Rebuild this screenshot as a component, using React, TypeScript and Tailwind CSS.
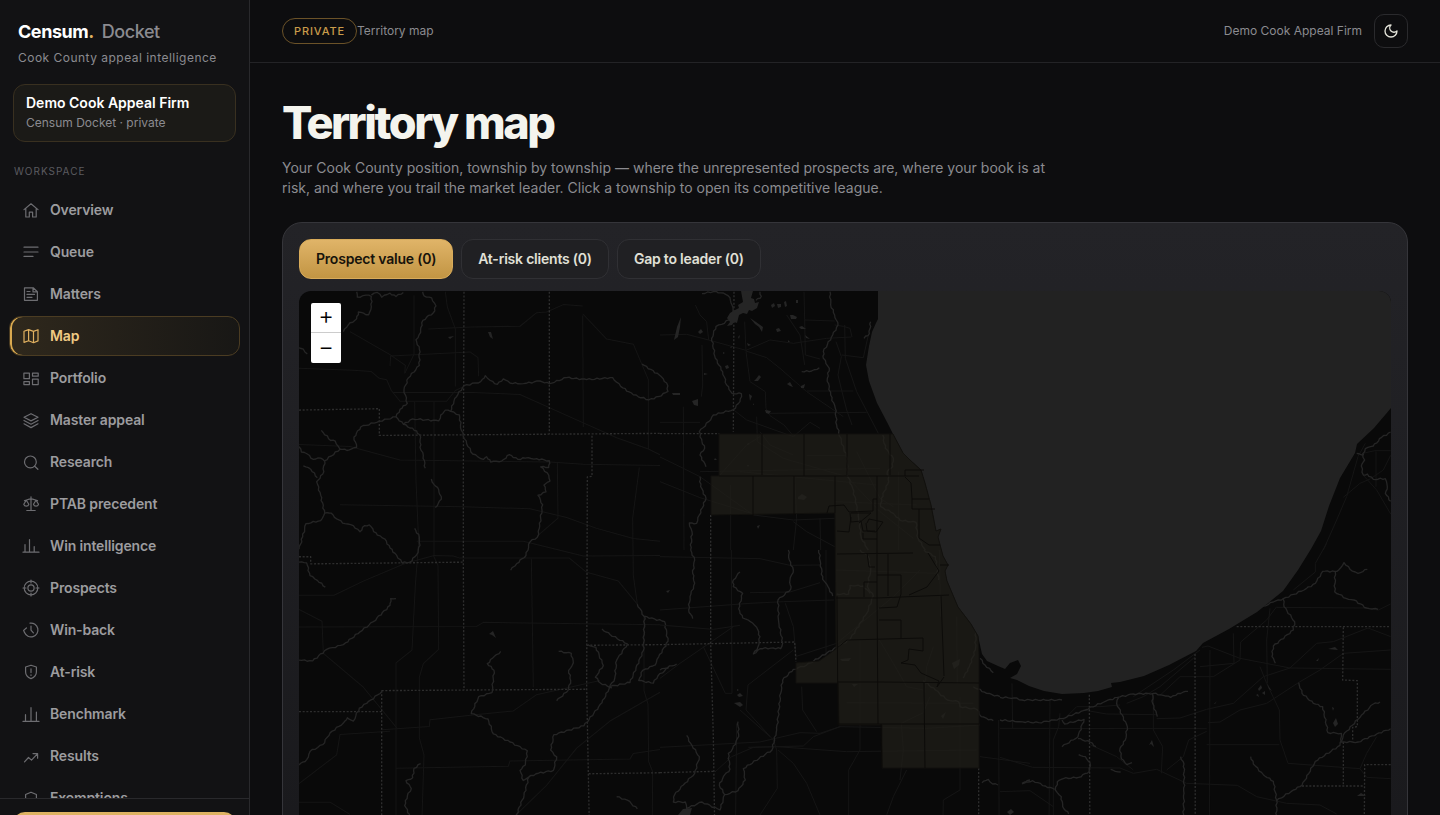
import React, { useState } from 'react'

type NavItem = { label: string; icon: React.ReactNode }

const navItems: NavItem[] = [
  { label: 'Overview', icon: <path d="M1 7.6 8 1.8l7 5.8M2.8 6.2V15h3.5v-4.8h3.3V15h3.6V6.2" /> },
  { label: 'Queue', icon: <path d="M1 3.2h14M1 8h14M1 12.4h9" /> },
  { label: 'Matters', icon: <path d="M1.5 1.8h8.7l4.2 4v8.5H1.5zM10 2v3.9h4.2M4 5.5h3M4 8.4h7.5M4 11.3h5" /> },
  { label: 'Map', icon: <path d="M1 3.2l4.6-1.6 4.9 1.8L15 1.7v11.2l-4.5 1.8-4.9-1.9L1 14.4zM5.6 1.6v11.2M10.5 3.4v11.3" /> },
  { label: 'Portfolio', icon: <path d="M.9 3.2h5.5v5.5H.9zM9.5 3.2h5.7v3H9.5zM.9 11.6h5.5v3H.9zM9.5 9.2h5.7v5.4H9.5z" /> },
  { label: 'Master appeal', icon: <path d="M8 1.7l7 3.6-7 3.6-7-3.6zM1 8.5l7 3.7 7-3.7M1 11.8l7 3.8 7-3.8" /> },
  { label: 'Research', icon: <><circle cx="7.4" cy="7.9" r="5.9" /><path d="M11.7 12.2l3.2 3.1" /></> },
  { label: 'PTAB precedent', icon: <path d="M8 .8v13.7M3.8 14.5h8.4M1.500 4.600C4 4.400 5 2.800 8 2.800s4 1.600 6.500 1.800M3.300 4.200L.8 8.300a2.600 2.600 0 0 0 5 0zM13 4.200l-2.500 4.100a2.600 2.600 0 0 0 5 0z" /> },
  { label: 'Win intelligence', icon: <path d="M0 14.2h16M2 6.5v7.5M6.5 1.5V14M11.2 8.5V14" /> },
  { label: 'Prospects', icon: <><circle cx="8" cy="8" r="6.8" /><circle cx="8" cy="8" r="3.1" /><path d="M8 0v3M8 13v3M0 8h3M13 8h3" /></> },
  { label: 'Win-back', icon: <path d="M7 1.2A6.9 6.9 0 1 1 1.6 10.5M.7 8.6l.9 2.2M.6 8.4L3.4 6M8 4v4.2l2.4 2.6" /> },
  { label: 'At-risk', icon: <path d="M8 1.2L13.4 3v5c0 3.2-2.2 5.4-5.4 6.6C4.8 13.4 2.6 11.2 2.6 8V3zM8 4.8v3.8M8 10.8v.6" /> },
  { label: 'Benchmark', icon: <path d="M0 15.4h16M2.5 8.7v6.5M8 1.7v13.5M13.4 6v9.2" /> },
  { label: 'Results', icon: <path d="M1.5 13.8l4-4.3 3 2.6 5.9-6.2M10 5.6h4.6v4.6" /> },
  { label: 'Exemptions', icon: <path d="M8 2.2l5.4 2.3v4c0 3-2.2 5-5.4 6.2-3.2-1.2-5.4-3.2-5.4-6.2v-4z" /> },
]

const layers = ['Prospect value (0)', 'At-risk clients (0)', 'Gap to leader (0)']

// Each sheet has its own origin and scale, about three units per map pixel.
type Sheet = {
  transform: string
  rivers: string[]
  roads: string[]
  borders: string[]
}

const sheets: Sheet[] = [
  {
    transform: 'translate(-9 -6) scale(0.33333 0.33801)',
    rivers: [
      '398,20 402,32 425,38 438,62 430,82 410,95 395,112 392,140 378,162 388,190 388,238 355,275 342,310 352,350 330,368 318,390 268,403 212,420 192,450 200,480 178,488 150,486 104,520 98,560 80,582 92,622 104,675 92,697 48,706 38,745 27,782',
      '200,20 202,36 228,30 244,34 244,64 236,88 205,80 200,100 175,118 160,138', '244,30 262,22 275,36 300,24 318,34 340,22',
      '27,186 40,190 52,204', '94,430 122,460 136,462 150,486', '27,478 34,494 52,500 70,516 92,512 104,522', '40,535 62,545 82,570',
      '104,675 124,675 140,692 165,706 190,712 210,730 224,712 238,710 262,740 285,752 300,778 320,800 336,822 360,820 380,798 390,770 388,745 374,720',
      '318,390 340,412 380,432 392,450 390,480 400,505 406,542', '340,412 368,396 446,402 452,385 466,370 482,374 494,336 522,298 572,286 586,268 600,282 622,294 640,278 660,290 700,292 750,284 778,292 830,274 890,280 968,274 992,300 1030,325 1076,340 1106,330 1134,315 1130,290 1108,266 1056,234',
      '482,374 508,384 514,430 530,470 548,500 580,516 590,508 602,524 636,520 658,502 684,516 706,512 740,514 778,520 776,540 752,538 772,556 780,580 762,592 768,612 744,622 758,650 752,690 748,720 742,746 720,760 708,800 680,824 662,844',
      '424,574 432,590 446,605 454,634 436,658', '27,820 50,822 60,860 82,874 106,894', '27,1110 68,1112 110,1078 160,1064 210,1026 250,996 300,948 302,928 318,928',
      '27,1420 50,1404 60,1380 98,1360 120,1325 160,1296 172,1280 190,1290 208,1252 230,1238 276,1202', '392,1416 372,1430 368,1458 348,1466 364,1490 352,1512 344,1540 358,1566 360,1700',
      '632,1084 608,1104 592,1120 612,1140 606,1206 566,1218 544,1268 594,1284 610,1328 660,1352 712,1378 706,1420 690,1436 700,1466 716,1456 738,1446 790,1436 800,1396 782,1376 792,1330 882,1304 936,1236 960,1188 1020,1176 1060,1082 1064,980', '716,1456 702,1510 680,1566 640,1720',
      '806,1084 844,1090 850,1118 836,1140 842,1170 834,1200 800,1230', '936,1018 960,1034 1012,1062 980,1110 974,1165 958,1190', '892,1064 918,1072 940,1126 916,1160 932,1178 966,1192',
      '1042,944 1062,980 1124,996 1134,1054 1106,1100 1096,1124 1058,1140 1046,1170 1090,1178 1104,1156 1136,1132', '980,1514 1012,1524 1042,1550',
    ],
    roads: [
      '27,246 190,252 244,256 268,276 290,280 304,312 330,344 470,344 496,312 522,300', '372,30 372,205 345,260', '466,20 472,65 496,130 496,300', '415,130 545,124 690,122 740,82 770,80 820,58 878,62', '300,240 302,210 540,198 564,215 566,270', '310,318 550,318 690,324 880,408 980,452 1075,485 1110,502',
      '432,345 432,800', '344,262 346,238 300,206 180,138', '878,90 880,420', '878,85 950,160 1030,175 1075,280 1075,485', '27,472 180,478 330,518 780,524 880,530 1110,534', '374,345 378,580 386,760 376,890 366,1080 318,1118 318,1700',
      '150,650 520,656 720,662 830,688 920,720 1030,750 1110,758', '27,918 132,918 220,876 345,824 432,800 490,802 510,808 838,808 890,850 985,876 1042,944', '430,800 444,830 446,1078 400,1120 388,1160 388,1340 402,1390 392,1700', '27,1012 560,1010 580,998 1110,1005',
      '724,810 730,1190', '276,1316 418,1306 420,1286 548,1272 670,1260 740,1212 930,1170', '27,1475 140,1390 150,1330 300,1320', '318,1430 655,1424 660,1408 1020,1402 1030,1386 1110,1374', '1062,980 1062,1200 1074,1240 1076,1410 1088,1440 1086,1700', '680,1566 770,1480 860,1370 960,1290 1110,1205', '27,1530 120,1530 180,1566', '802,525 804,690 745,740', '1048,540 1028,690 1030,860 1042,944', '27,960 96,995 100,1090 220,1190 320,1310', '380,758 700,758 880,802 1110,800',
    ],
    borders: ['522,20 520,560 520,820 522,1198', '778,20 778,440', '27,370 268,366 268,445 1110,439', '906,446 906,566 892,568 890,1190 900,1700', '27,804 62,804 62,825 520,820', '275,1200 890,1196', '27,1262 275,1262', '275,1200 275,1700', '890,1066 1110,1064', '896,1446 1110,1443'],
  },
  {
    transform: 'translate(361 -6) scale(0.33333)',
    rivers: [
      '126,26 160,20 190,24 210,38 216,60 222,95 185,118 168,124 155,160 166,220 188,260 200,300 216,325 244,326 240,350 220,374 160,390 146,410 118,440 126,470 134,490 120,510 138,545',
      '510,20 512,60 524,90 534,120 518,150 490,200 490,220 508,250 502,280 512,330 526,370 530,420 544,470 562,520 562,570 578,610 590,660 596,700 604,760 625,795', '120,575 122,605 138,640 118,690 110,715 88,714 96,740 92,795',
      '668,450 676,490 700,520 698,545 682,560 686,590 664,640 662,665 700,685 720,706 768,712 774,760 796,795', '612,160 628,146 632,110', '300,20 304,34 288,46', '425,260 455,258 478,248',
    ],
    roads: [
      '254,110 258,200 270,290 316,320 318,370 330,392 372,420 402,455', '106,60 120,90 140,110 146,165 258,196 330,165 400,175 500,160 574,156', '0,150 80,148 146,165', '330,385 620,382', '554,120 556,220 590,320 655,445', '524,120 550,124 570,130 576,156', '545,210 610,218 625,150', '258,198 320,218 360,250 440,320 550,395', '440,318 580,318', '126,180 128,300 124,335',
      '0,412 120,412', '432,20 434,105 524,108', '434,105 436,210 480,222', '0,516 70,550 120,575 280,690 400,705 524,700', '0,590 120,638 290,690', '404,574 410,700 400,795', '220,374 260,405 400,455 450,412 480,430', '290,395 292,470 370,520 560,575 660,680 760,760', '180,570 260,480 300,455', '70,365 72,795',
      '590,500 660,640 700,665', '440,512 560,512', '120,560 660,550', '240,560 650,600', '480,700 482,795', '300,440 330,480 400,510', '528,170 544,215 534,270 546,320 560,375 576,420', '380,90 420,150 434,240', '212,600 212,795', '716,560 716,795', '400,710 440,740 524,785', '524,650 770,660',
    ],
    borders: ['222,20 220,440', '0,446 178,446', '152,690 152,795'],
  },
  {
    transform: 'translate(361 259) scale(0.33333)',
    rivers: [
      '92,0 104,30 98,70 104,100 90,140 86,180 98,206', '385,0 388,30 400,60 390,90 392,118 354,150 356,215 368,280 362,296 340,294 300,296 280,312 294,290 300,260 290,232 270,214 248,204 236,176 248,130 220,110 220,90 240,66', '476,0 482,40 488,88 504,110 518,138', '0,360 50,342',
      '600,0 625,20 632,60 622,110 640,138 620,190 570,268 440,345 400,358 368,390 362,430 350,540 336,600 250,656 256,690 234,722 194,734 178,706 190,680 210,658 205,610 218,596 236,560 234,515', '80,556 92,580 118,620 104,670 70,705 44,734 40,756 76,756 80,775 126,756 180,780 194,734', '0,960 40,840 90,780',
      '792,0 826,20 836,90', '790,392 826,420 862,450 895,455 900,470 950,478 964,500 1000,512', '910,384 928,350 946,300 948,240', '960,325 975,345 1000,368', '966,698 985,688 998,702 1014,705', '1086,702 1110,690', '530,132 566,132 570,106 610,108 630,130', '940,410 980,430 1020,440',
    ],
    roads: [
      '0,180 270,160 370,155 522,150', '0,225 160,238 240,226', '270,128 390,126 480,98', '0,20 300,26 390,46 480,45', '0,592 300,576 420,548 480,550 540,530 800,535 960,525', '265,592 430,588 460,560 540,530', '166,665 215,620 280,592 350,590 560,605 950,600', '214,0 216,430 196,430 130,290', '400,300 264,405 258,480 340,570 350,600 352,715 300,795', '406,320 530,280 700,140 780,60', '354,600 400,640 440,700 480,795 520,960',
      '600,270 600,600 566,660 566,960', '720,690 730,600 724,520 790,488 810,440', '740,660 700,740 680,795 650,960', '900,440 900,720 850,750 846,960', '960,620 1110,640', '1016,510 1018,960', '838,0 842,200', '526,60 830,70', '658,270 700,340 740,410 790,420', '820,290 800,350 790,480', '560,458 940,460', '890,200 892,400', '240,480 330,560', '498,0 498,310 440,345', '376,160 400,230 408,320', '425,410 428,480 470,545', '230,520 225,960', '0,385 60,340 220,230',
    ],
    borders: ['152,0 152,280 160,560 166,960', '0,284 404,276 408,335', '0,668 166,664', '956,655 956,960'],
  },
  {
    transform: 'translate(701 249) scale(0.33333)',
    rivers: [
      '780,204 820,186 850,176 912,150 946,130 968,94 1004,94 1016,90 1032,68 1050,88 1074,100 1102,88', '1006,96 1004,155 1038,175 1062,180 1100,204 1134,208', '850,178 852,200 884,245 880,270 820,318 816,350 826,370',
      '0,472 42,474 66,480 186,480', '0,540 60,545 116,548 186,536 250,512 316,484 352,472 400,462 460,460 490,466 512,472 534,460 564,454', '186,540 194,552 252,538 234,590 186,620', '234,596 270,606 288,620', '356,472 350,490 382,560 376,600 360,625 364,656 380,674 396,668', '458,462 458,490 472,530', '236,644 256,650 270,668 268,694 236,712 190,716 172,725 166,750 184,770 188,800 206,822', '66,730 98,722 136,738 164,748', '332,688 346,694 362,696',
      '542,650 552,672 552,760 546,990', '752,650 760,672 790,704 820,724 830,780 828,990', '830,782 880,750 906,736 946,664 1020,616 1030,585 1084,526 1120,492 1140,486', '896,428 906,460 940,490 968,500 984,578 1024,580 1024,606 1074,606 1130,582 1172,566',
    ],
    roads: [
      '830,202 1090,204 1136,210 1172,192', '980,10 946,70 946,96 880,150', '606,322 624,318 720,355 870,384 1172,388', '480,466 540,410 640,410 720,360 722,306 800,240 830,200', '380,490 430,470 480,440 586,350', '470,536 540,534 620,508 700,490 790,410 870,384 950,310 1000,305 1104,264 1172,290', '0,565 620,566', '180,520 176,560 160,600 160,990', '0,652 98,682 360,684 400,700 470,688 560,730 712,736 770,770 860,790 960,795 1010,822', '460,466 460,570 488,620 484,700', '630,330 628,990', '624,548 660,546 720,510 800,490 900,425 960,390 1030,340 1172,330',
      '780,380 800,430 838,510 840,600 864,670 1080,686 1100,640 1130,590', '500,690 550,650 566,600 620,574', '190,540 230,500 300,500 360,495', '250,510 320,522 470,524', '270,614 350,650 400,690', '36,430 38,565', '150,480 146,990', '810,205 800,300 802,430', '700,280 702,370 600,380', '400,470 520,390 600,330', '620,614 838,614', '1080,686 1100,712 1172,716', '0,755 90,752 160,800',
    ],
    borders: ['710,260 1172,260', '1030,262 1028,420 1072,422 1072,560 1058,562 1058,600', '1030,606 1030,738', '1172,674 1094,674 1092,990', '906,738 1092,738', '585,342 586,990', '268,464 270,990'],
  },
  {
    transform: 'translate(901 -81) scale(0.33333)',
    rivers: ['572,666 545,682 520,708 496,716 488,732 494,750 484,768 490,795 502,792 520,808 556,806 562,830 556,850 572,874', '470,730 492,734'],
    roads: ['496,700 474,740 440,860 410,930 370,1020', '430,862 480,820 512,806 550,780 572,736', '490,796 530,840 572,912', '488,730 525,722 572,722', '528,724 528,830'],
    borders: [],
  },
]

// Township lines inside Cook County, in map pixels
const townshipLines = [
  '463,143 463,184', '505,143 505,185', '548,143 548,184', '591,143 591,184', '420,185 620,185', '454,185 454,226', '495,185 495,224', '536,185 536,222', '578,185 578,300 579,433',
  '606,185 606,179 625,179', '606,186 612,192 613,208 630,208', '613,208 613,218 636,218', '620,218 620,247 630,254 641,254', '528,222 530,215 545,214 550,221 574,220 574,208 578,208', '551,222 552,231 562,230 564,240 576,240', '568,232 570,228 584,231 577,241 568,240 567,232', '538,240 550,241 552,226', '552,222 572,222 560,232', '564,242 564,248 578,248',
  '538,263 614,262', '537,307 578,307 650,304', '589,263 589,284 602,284 602,303 598,316 580,317', '578,284 589,284 589,305', '565,306 565,291 578,291', '642,305 645,385', '580,329 602,329 602,348', '548,349 624,347 624,360 610,358 609,369 602,372 616,374 622,382 640,390 638,396 645,386', '538,357 548,349', '539,391 582,391 680,392', '538,433 680,433', '582,433 583,477', '625,392 626,477', '538,305 539,433', '629,262 640,280 628,296 610,304', '568,262 570,276 576,276', '641,274 650,274',
]

const lakes = [
  '442,0 444,11 439,14 440,17 436,19 431,22 428,27 431,31 428,35 433,34 435,31 438,32 440,24 444,22 448,23 450,19 453,20 458,17 460,11 456,12 455,8 452,7 454,0', '451,27 456,33 460,36 463,41 464,36 457,31',
  '381,36 382,26 378,36 375,49 379,46', '472,14 475,12 476,15 473,17', '478,13 482,13 482,16 479,17', '485,11 487,10 488,15 486,16', '497,9 499,9 499,12 497,12', '491,24 494,24 498,26 497,28 492,28', '399,41 402,38 404,41 401,43', '477,38 480,37 482,40 478,41', '500,36 503,35 507,38 502,38', '506,44 511,48 507,47', '489,49 491,51 489,51', '439,46 441,44 440,48', '448,52 452,54 449,55', '431,56 434,55 432,57', '424,61 426,62 424,63', '426,75 429,74 430,77 427,78', '405,82 409,83 405,84',
  '457,88 460,84 462,86 459,90 455,90', '488,93 491,91 494,96 491,95', '502,95 506,93 505,97 502,97', '393,110 399,108 399,115 395,114', '373,102 381,102 381,104 374,104', '450,103 453,105 451,110', '466,119 472,120 470,123 467,122', '454,112 455,114 454,114', '449,152 451,153 448,154', '416,167 418,169 415,169',
  '499,206 503,203 508,206 505,209 499,208', '448,174 450,174 449,176', '541,368 552,367 550,370 543,370', '653,372 661,368 660,374 655,378', '642,425 647,421 644,428', '553,393 559,393 555,396', '435,412 441,411 444,414 441,416', '438,404 441,402 444,405 440,406', '438,398 440,399 438,400', '379,524 384,518 393,517 391,524', '458,235 461,234 459,238', '367,300 371,299 369,302',
  '959,398 962,394 963,397 960,400', '963,402 966,400 966,404', '957,404 959,403 960,406', '968,392 970,396 973,400 970,398', '1029,358 1036,356 1039,359', '1017,370 1020,367 1019,370', '1033,416 1035,417 1034,420', '1034,432 1037,427 1039,433 1036,436', '1058,505 1062,502 1067,505', '189,41 192,41 194,48 191,46', '149,46 155,45 151,48', '190,343 194,340 197,347 193,344', '850,454 853,449 855,456 852,453', '708,521 712,518 715,521 711,524', '915,413 918,410 916,413',
]

const coast = 'M579 0V28L577 32 573 41 570 55 567 74 570 90 578 112 589 133 594 143 604 162 611 169 622 179 626 192 632 214 637 240 642 238 639 246 644 265 649 274 646 280 648 290 659 316 672 333 679 345 683 363 688 370 699 375 706 378 711 372 719 369 722 375 718 383 711 387 718 389 730 395 745 400 763 403 785 402 799 400 813 396 812 392 821 391 845 385 870 374 897 360 904 352 930 338 958 321 984 300 999 279 1012 258 1022 240 1030 215 1041 187 1056 162 1058 153 1075 137 1092 117V0Z'

// Bends a straight run of points so that streams do not look ruled.
function meander(points: string) {
  const pts = points.split(' ').map(p => p.split(',').map(Number))
  let d = `M${pts[0][0]} ${pts[0][1]}`
  for (let i = 1; i < pts.length; i++) {
    const [ax, ay] = pts[i - 1]
    const [bx, by] = pts[i]
    const len = Math.hypot(bx - ax, by - ay)
    const steps = Math.max(1, Math.round(len / 8))
    for (let s = 1; s <= steps; s++) {
      const t = s / steps
      const off = s === steps ? 0 : Math.sin(ax * 1.7 + by * 2.3 + s * 4.1) * 2.2
      const x = ax + (bx - ax) * t - ((by - ay) / (len || 1)) * off
      const y = ay + (by - ay) * t + ((bx - ax) / (len || 1)) * off
      d += `L${x.toFixed(1)} ${y.toFixed(1)}`
    }
  }
  return d
}

function TerritoryMap() {
  return (
    <svg className="block w-full h-full" viewBox="0 0 1092 640" preserveAspectRatio="xMidYMin slice" role="img" aria-label="Cook County townships">
      <rect width="1092" height="640" fill="#090909" />
      {sheets.map(sheet => (
        <g key={sheet.transform} transform={sheet.transform} fill="none" strokeLinejoin="round">
          {sheet.roads.map(p => <polyline key={p} points={p} stroke="#151515" strokeWidth="3" />)}
          {sheet.borders.map(p => <polyline key={p} points={p} stroke="#2d2d2d" strokeWidth="4" strokeDasharray="6 5" />)}
          {sheet.rivers.map(p => <path key={p} d={meander(p)} stroke="#252525" strokeWidth="4" />)}
        </g>
      ))}
      {lakes.map(p => <polygon key={p} points={p} fill="#252525" />)}
      <path d={coast} fill="#222222" />
      {/* Cook County */}
      <path
        d="M420 143H594L604 162 611 169 622 179 626 192 632 214 637 240 642 238 639 246 644 265 649 274 646 280 648 290 659 316 672 333 679 345 680 363V477H583V434H540L539 392H497V372L520 370 537 358 536 222 412 224V185H420Z"
        fill="#201e19"
        fillOpacity="0.72"
        stroke="#12110e"
      />
      <g fill="none" stroke="#0c0b09">
        {townshipLines.map(p => <polyline key={p} points={p} />)}
      </g>
    </svg>
  )
}

export default function App() {
  const [active, setActive] = useState('Map')
  const [layer, setLayer] = useState(layers[0])

  return (
    <div className="flex h-screen overflow-hidden bg-[#0d0d0f] font-['Inter',sans-serif] text-[#f4f4ee]">
      <aside className="flex h-[calc(100vh+45px)] w-[250px] shrink-0 flex-col border-r border-[#29292c] bg-[#121214]">
        <div className="px-[18px] pt-5">
          <div className="flex items-baseline gap-2 text-lg leading-6 tracking-tight">
            <span className="font-bold text-white">Censum<span className="text-[#e0b060]">.</span></span>
            <span className="font-medium text-[#8b8b90]">Docket</span>
          </div>
          <p className="mt-1 text-xs leading-5 tracking-[0.04em] text-[#8b8b90]">Cook County appeal intelligence</p>
        </div>
        <div className="mx-[13px] mt-4 rounded-xl border border-[#393020] bg-[#1b1a17] px-3 py-2 leading-5">
          <p className="text-sm leading-5 font-semibold text-white">Demo Cook Appeal Firm</p>
          <p className="text-xs leading-5 text-[#8b8b90]">Censum Docket · private</p>
        </div>
        <h2 className="mt-[19px] px-[14px] text-[10px] leading-5 tracking-widest text-[#5b5b60]">WORKSPACE</h2>
        <nav className="mt-[9px] flex min-h-0 flex-1 flex-col gap-[2px] overflow-hidden px-[9px]">
          {navItems.map(item => (
            <a
              key={item.label}
              href="#"
              onClick={() => setActive(item.label)}
              className={
                item.label === active
                  ? 'flex h-10 shrink-0 items-center gap-[11px] rounded-xl border border-[#4b3c22] bg-linear-to-r from-[#2f281c] to-[#181715] px-[13px] text-sm font-semibold tracking-[-0.01em] text-[#f0cb84] shadow-[inset_2px_0_0_#d9a94f]'
                  : 'flex h-10 shrink-0 items-center gap-[11px] rounded-xl border border-transparent px-[13px] text-sm font-semibold tracking-[-0.01em] text-[#9c9c9f]'
              }
            >
              <svg
                className={item.label === active ? 'size-4 shrink-0 text-[#e0b060]' : 'size-4 shrink-0 text-[#6d6d71]'}
                viewBox="0 0 16 16"
                fill="none"
                stroke="currentColor"
                strokeWidth="1.2"
                strokeLinecap="round"
                strokeLinejoin="round"
                overflow="visible"
                aria-hidden="true"
              >
                {item.icon}
              </svg>
              {item.label}
            </a>
          ))}
        </nav>
        <div className="shrink-0 border-t border-[#29292c] px-[13px] pt-[13px] pb-2">
          <button type="button" aria-label="New matter" className="block h-10 w-full rounded-xl bg-linear-to-b from-[#e0b464] to-[#c2953f]" />
        </div>
      </aside>

      <div className="flex min-w-0 flex-1 flex-col">
        <header className="flex shrink-0 items-center justify-between border-b border-[#232326] px-8 py-[14px]">
          <div className="flex items-center text-xs leading-5 text-[#8b8b90]">
            <span className="rounded-full border border-[#6b5228] px-[11px] py-[3px] text-[11px] leading-[18px] font-medium tracking-[0.08em] text-[#c99c4b]">PRIVATE</span>
            <span>Territory map</span>
          </div>
          <div className="flex items-center gap-3 text-xs text-[#8b8b90]">
            <span>Demo Cook Appeal Firm</span>
            <button type="button" aria-label="Toggle theme" className="flex size-[34px] items-center justify-center rounded-[10px] border border-[#2a2a2d] text-[#e4e4da]">
              <svg className="size-4" viewBox="0 0 24 24" fill="none" stroke="currentColor" strokeWidth="2" strokeLinejoin="round">
                <path d="M12 3a6 6 0 0 0 9 9 9 9 0 1 1-9-9Z" />
              </svg>
            </button>
          </div>
        </header>

        <main className="min-h-0 flex-1 overflow-y-auto px-8 pt-9 [scrollbar-width:none]">
          <h1 className="text-[45px] leading-[48px] font-extrabold tracking-[-0.055em]">Territory map</h1>
          <p className="mt-[11px] max-w-[780px] text-sm leading-5 text-[#8b8b90]">
            Your Cook County position, township by township — where the unrepresented prospects are, where your book is at risk, and where you trail the market leader. Click a township to open its competitive league.
          </p>

          <section className="mt-6 mb-8 rounded-[20px] border border-[#35353a] bg-linear-to-b from-[#232327] to-[#18181b] p-4">
            <div className="flex flex-wrap gap-2">
              {layers.map(name => (
                <button
                  key={name}
                  type="button"
                  onClick={() => setLayer(name)}
                  className={
                    name === layer
                      ? 'h-10 rounded-xl border border-[#d8ab5a] bg-linear-to-b from-[#e0b468] to-[#c29543] px-4 text-sm font-semibold tracking-[-0.015em] text-[#17130b]'
                      : 'h-10 rounded-xl border border-[#303034] bg-[#202023] px-4 text-sm font-semibold tracking-[-0.015em] text-[#e0e0d8]'
                  }
                >
                  {name}
                </button>
              ))}
            </div>
            <div className="relative mt-3 h-[640px] overflow-hidden rounded-xl">
              <TerritoryMap />
              <div className="absolute top-3 left-3 flex flex-col overflow-hidden rounded-[2px] bg-white text-2xl font-light text-black">
                <button type="button" aria-label="Zoom in" className="flex size-[30px] items-center justify-center border-b border-[#cccccc] pb-[3px] leading-6">+</button>
                <button type="button" aria-label="Zoom out" className="flex size-[30px] items-center justify-center pb-[3px] leading-6">−</button>
              </div>
            </div>
          </section>
        </main>
      </div>
    </div>
  )
}
